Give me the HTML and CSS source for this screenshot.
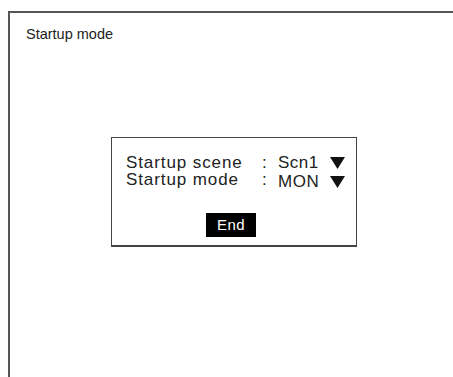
FILE: index.html
```html
<!DOCTYPE html>
<html lang="en">
<head>
  <meta charset="UTF-8">
  <title>Startup mode</title>
  <link rel="stylesheet" href="styles.css">
</head>
<body>
  <div class="screen">
    <div class="title">Startup mode</div>

    <div class="dialog">
      <div class="rows">
        <div class="row">
          <span class="label">Startup scene</span>
          <span class="colon">:</span>
          <span class="value">Scn1</span>
          <svg class="arrow" width="15" height="12" viewBox="0 0 15 12"><path d="M0 0H15L7.5 12Z" fill="#111"/></svg>
        </div>
        <div class="row">
          <span class="label">Startup mode</span>
          <span class="colon">:</span>
          <span class="value">MON</span>
          <svg class="arrow" width="15" height="12" viewBox="0 0 15 12"><path d="M0 0H15L7.5 12Z" fill="#111"/></svg>
        </div>
      </div>
      <div class="end">End</div>
    </div>
  </div>
</body>
</html>
```

FILE: styles.css
```css
body {
  margin: 0;
  background: #fff;
  font-family: "Liberation Sans", Arial, sans-serif;
  color: #222;
}
.screen {
  margin: 11px 0 0 8px;
  height: 360px;
  border-top: 2px solid #555;
  border-left: 2px solid #555;
  border-bottom: 1px solid #eee;
  padding: 12px 0 0 16px;
}
.title {
  font-size: 14.5px;
  line-height: 18px;
}
.dialog {
  margin: 94px 0 0 85px;
  width: 246px;
  height: 110px;
  box-sizing: border-box;
  border: 1px solid #444;
  border-bottom-width: 2px;
  padding: 16px 0 0 14px;
}
.row {
  display: flex;
  align-items: baseline;
  font-size: 17px;
  line-height: 17px;
  letter-spacing: 0.9px;
}
.label {
  width: 136px;
}
.colon {
  width: 16px;
}
.value {
  width: 52px;
  letter-spacing: 0.5px;
}
.row:nth-child(2) .value {
  position: relative;
  top: 2px;
}
.arrow {
  align-self: center;
}
.row:nth-child(2) .arrow {
  margin-top: 4px;
}
.end {
  margin: 25px 0 0 80px;
  width: 50px;
  height: 24px;
  background: #000;
  color: #fff;
  font-size: 15px;
  line-height: 24px;
  letter-spacing: 0.5px;
  text-align: center;
}
```
